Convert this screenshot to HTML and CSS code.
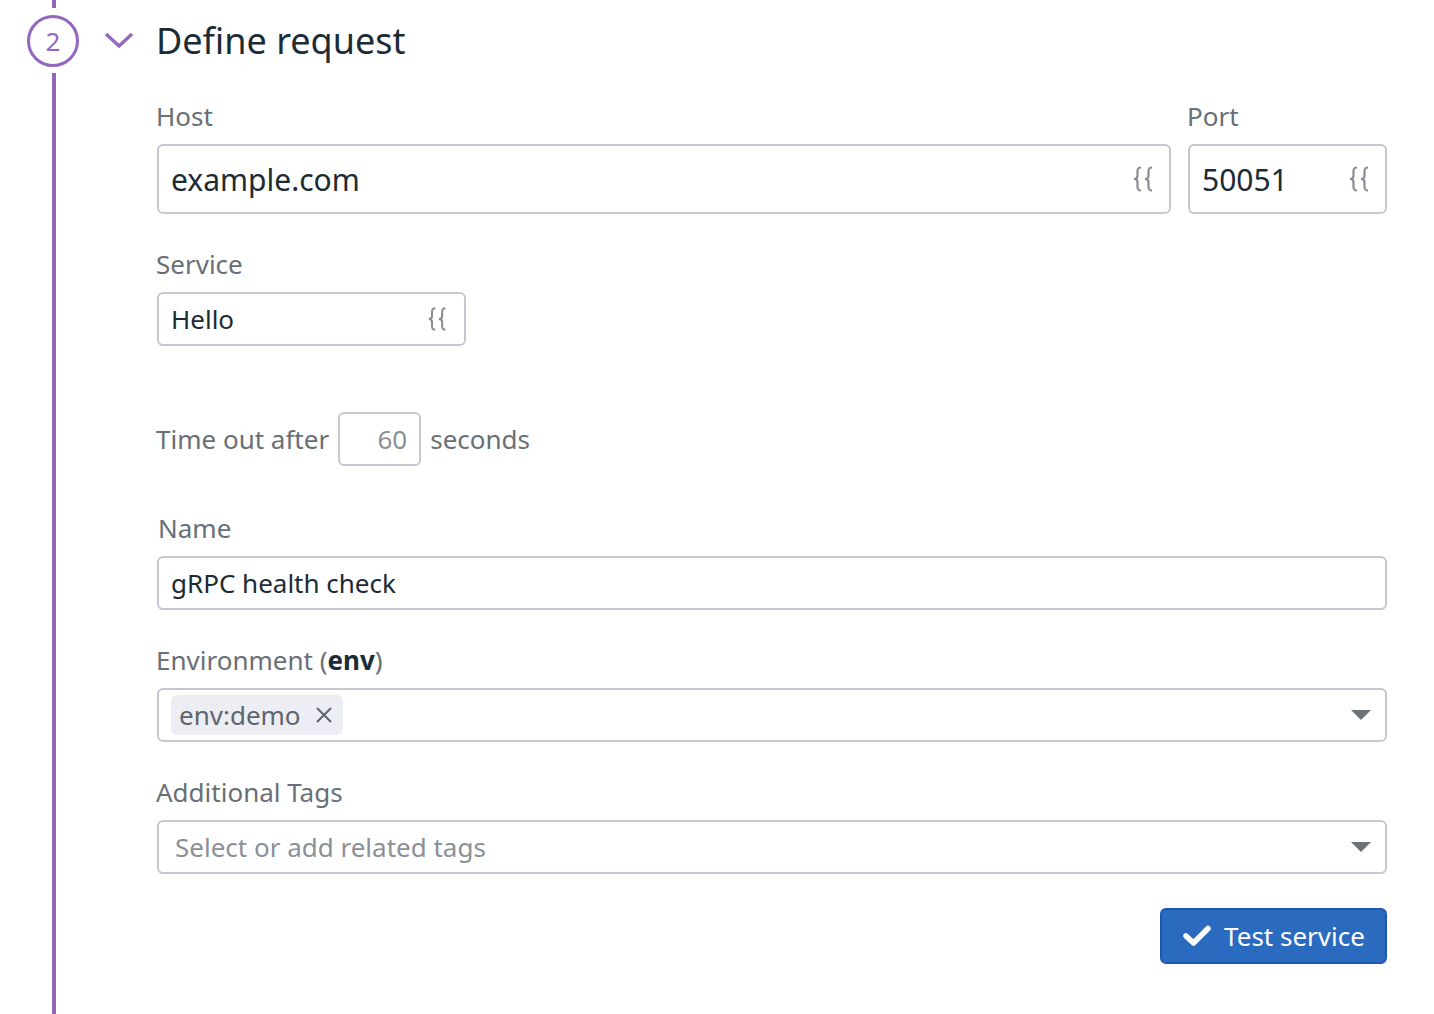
FILE: index.html
```html
<!DOCTYPE html>
<html>
<head>
<meta charset="utf-8">
<link rel="stylesheet" href="styles.css">
</head>
<body>
<div class="page">
  <div class="rail">
    <div class="rail-top"></div>
    <div class="step">2</div>
    <div class="rail-line"></div>
  </div>
  <div class="content">
    <div class="header">
      <svg class="chevron" width="30" height="18" viewBox="0 0 30 18"><path d="M2 3 L15 15 L28 3" fill="none" stroke="#9467bd" stroke-width="3.4"/></svg>
      <h1 class="title">Define request</h1>
    </div>

    <div class="row host-row">
      <div class="field grow">
        <div class="label">Host</div>
        <div class="input big">
          <span class="value">example.com</span>
          <svg class="brace" width="26" height="26" viewBox="0 0 26 26"><path d="M10 1.5 C6.5 1.5 6.5 3.5 6.5 5.5 L6.5 10 C6.5 12 5.5 13 3 13 C5.5 13 6.5 14 6.5 16 L6.5 20.5 C6.5 22.5 6.5 24.5 10 24.5 M21 1.5 C17.5 1.5 17.5 3.5 17.5 5.5 L17.5 10 C17.5 12 16.5 13 14 13 C16.5 13 17.5 14 17.5 16 L17.5 20.5 C17.5 22.5 17.5 24.5 21 24.5" fill="none" stroke="#878d93" stroke-width="2.2"/></svg>
        </div>
      </div>
      <div class="field port">
        <div class="label">Port</div>
        <div class="input big">
          <span class="value">50051</span>
          <svg class="brace" width="26" height="26" viewBox="0 0 26 26"><path d="M10 1.5 C6.5 1.5 6.5 3.5 6.5 5.5 L6.5 10 C6.5 12 5.5 13 3 13 C5.5 13 6.5 14 6.5 16 L6.5 20.5 C6.5 22.5 6.5 24.5 10 24.5 M21 1.5 C17.5 1.5 17.5 3.5 17.5 5.5 L17.5 10 C17.5 12 16.5 13 14 13 C16.5 13 17.5 14 17.5 16 L17.5 20.5 C17.5 22.5 17.5 24.5 21 24.5" fill="none" stroke="#878d93" stroke-width="2.2"/></svg>
        </div>
      </div>
    </div>

    <div class="field service">
      <div class="label">Service</div>
      <div class="input">
        <span class="value">Hello</span>
        <svg class="brace" width="24" height="26" viewBox="0 0 26 26"><path d="M10 1.5 C6.5 1.5 6.5 3.5 6.5 5.5 L6.5 10 C6.5 12 5.5 13 3 13 C5.5 13 6.5 14 6.5 16 L6.5 20.5 C6.5 22.5 6.5 24.5 10 24.5 M21 1.5 C17.5 1.5 17.5 3.5 17.5 5.5 L17.5 10 C17.5 12 16.5 13 14 13 C16.5 13 17.5 14 17.5 16 L17.5 20.5 C17.5 22.5 17.5 24.5 21 24.5" fill="none" stroke="#878d93" stroke-width="2.2"/></svg>
      </div>
    </div>

    <div class="timeout">
      <span class="label-inline">Time out after</span>
      <div class="input small"><span class="num">60</span></div>
      <span class="label-inline">seconds</span>
    </div>

    <div class="field name">
      <div class="label">Name</div>
      <div class="input"><span class="value">gRPC health check</span></div>
    </div>

    <div class="field gap">
      <div class="label">Environment (<b>env</b>)</div>
      <div class="input select">
        <span class="chip">env:demo
          <svg class="chip-x" width="18" height="18" viewBox="0 0 18 18"><path d="M2 2 L16 16 M16 2 L2 16" stroke="#5e656c" stroke-width="2" fill="none"/></svg>
        </span>
        <svg class="caret" width="20" height="10" viewBox="0 0 20 10"><path d="M0 0 L20 0 L10 10 Z" fill="#6b7278"/></svg>
      </div>
    </div>

    <div class="field gap">
      <div class="label">Additional Tags</div>
      <div class="input select">
        <span class="placeholder">Select or add related tags</span>
        <svg class="caret" width="20" height="10" viewBox="0 0 20 10"><path d="M0 0 L20 0 L10 10 Z" fill="#6b7278"/></svg>
      </div>
    </div>

    <div class="actions">
      <button class="btn">
        <svg width="30" height="22" viewBox="0 0 30 22"><path d="M4 11 L11.5 18 L26 3.5" fill="none" stroke="#fff" stroke-width="5.5" stroke-linecap="round" stroke-linejoin="round"/></svg>
        Test service
      </button>
    </div>
  </div>
</div>
</body>
</html>
```

FILE: styles.css
```css
* { box-sizing: border-box; }
html, body { margin: 0; padding: 0; background: #fff; }
body {
  font-family: "Noto Sans", "Open Sans", sans-serif;
  color: #1c2b34;
}
.page {
  display: flex;
  min-height: 1014px;
}
.rail {
  width: 100px;
  display: flex;
  flex-direction: column;
  flex-shrink: 0;
}
.rail-top {
  width: 4px;
  height: 8px;
  background: #9467bd;
  margin-left: 52px;
}
.step {
  margin-top: 7px;
  margin-left: 27px;
  width: 52px;
  height: 52px;
  border: 3px solid #9467bd;
  border-radius: 50%;
  color: #9467bd;
  font-size: 26px;
  display: flex;
  align-items: center;
  justify-content: center;
  line-height: 1;
}
.rail-line {
  flex: 1;
  width: 4px;
  margin-left: 52px;
  margin-top: 6px;
  background: #9467bd;
}
.content {
  flex: 1;
  padding: 15px 47px 0 0;
}
.header {
  display: flex;
  align-items: center;
  height: 52px;
  padding-left: 4px;
}
.chevron { margin-top: -2px; }
.title {
  margin: 0 0 0 22px;
  font-size: 36px;
  font-weight: 400;
  line-height: 52px;
  color: #1c2b34;
}
.row {
  display: flex;
  gap: 17px;
  padding-left: 57px;
}
.host-row { margin-top: 31px; }
.grow { flex: 1; }
.port { width: 199px; }
.field { display: flex; flex-direction: column; }
.label {
  font-size: 26px;
  line-height: 36px;
  color: #686f76;
  margin-bottom: 10px;
  margin-left: -1px;
}
.label b { color: #1c2b34; font-weight: 700; }
.input {
  height: 54px;
  border: 2px solid #c6c7d3;
  border-radius: 6px;
  display: flex;
  align-items: center;
  padding: 0 12px 0 12px;
  font-size: 26px;
  background: #fff;
}
.input.big { height: 70px; font-size: 30px; padding-right: 12px; }
.value { flex: 1; color: #1c2b34; }
.brace { flex-shrink: 0; }
.field.service, .field.name, .field.gap { padding-left: 57px; }
.field.service { margin-top: 32px; }
.field.service .input { width: 309px; padding-right: 14px; }
.timeout {
  display: flex;
  align-items: center;
  margin-top: 66px;
  padding-left: 56px;
  gap: 9px;
}
.label-inline { font-size: 26px; color: #686f76; }
.input.small {
  width: 83px;
  justify-content: flex-end;
  padding-right: 12px;
}
.num { color: #8a9096; }
.field.name { margin-top: 44px; }
.field.name .label { padding-left: 2px; }
.field.gap { margin-top: 32px; }
.select { padding-left: 12px; padding-right: 14px; justify-content: space-between; }
.chip {
  display: inline-flex;
  align-items: center;
  gap: 14px;
  height: 40px;
  background: #eceef4;
  border-radius: 6px;
  padding: 0 10px 0 8px;
  color: #5e656c;
  font-size: 26px;
}
.placeholder { color: #8a9096; padding-left: 4px; }
.actions {
  display: flex;
  justify-content: flex-end;
  margin-top: 34px;
}
.btn {
  height: 56px;
  width: 227px;
  display: flex;
  align-items: center;
  justify-content: center;
  gap: 12px;
  background: #2a6bc0;
  border: 2px solid #1f56b3;
  border-radius: 6px;
  color: #fff;
  font-family: "Noto Sans", "Open Sans", sans-serif;
  font-size: 26px;
  padding: 0;
}
```
